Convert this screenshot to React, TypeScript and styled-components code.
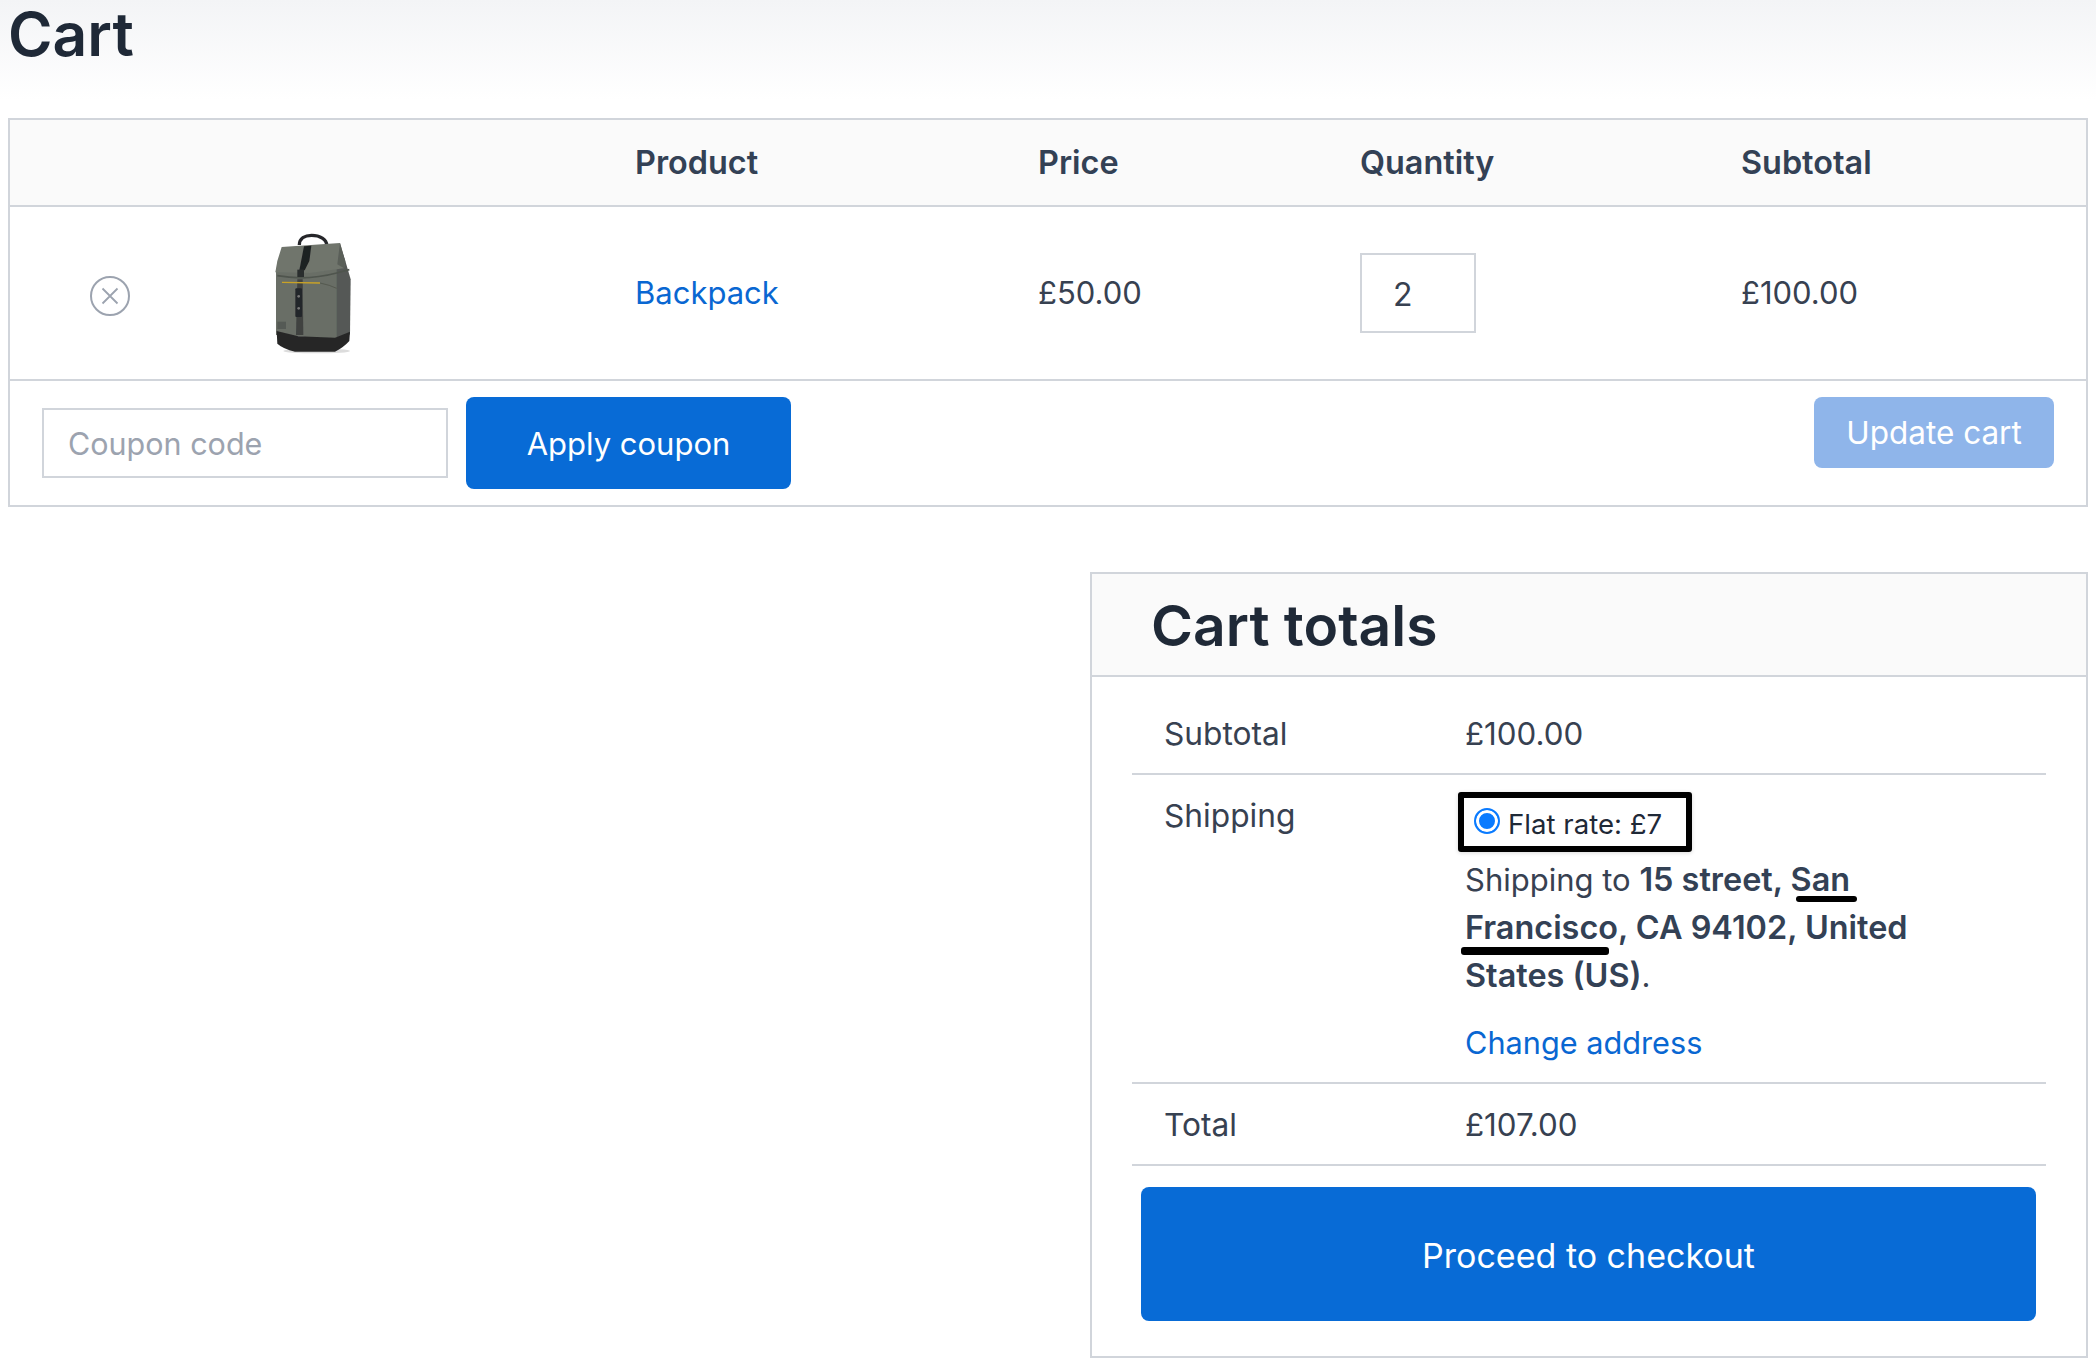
import React from 'react';
import styled, { createGlobalStyle } from 'styled-components';

const GlobalStyle = createGlobalStyle`
  html, body {
    margin: 0;
    padding: 0;
    background: #ffffff;
  }
  body {
    font-family: Inter, "Noto Sans", sans-serif;
    font-size: 32px;
    line-height: 48px;
    color: #374151;
  }
  * {
    box-sizing: border-box;
  }
`;

const Page = styled.div`
  width: 2096px;
  height: 1366px;
  overflow: hidden;
  background: linear-gradient(#f3f4f6 0, #ffffff 100px) no-repeat;
  padding: 0 8px;
`;

const PageTitle = styled.h1`
  margin: 0;
  height: 118px;
  font-size: 60.5px;
  line-height: 68px;
  font-weight: 600;
  color: #1f2937;
`;

const CartTable = styled.section`
  border: 2px solid #d1d5db;
`;

const Row = styled.div`
  display: grid;
  grid-template-columns: 200px 425px 403px 322px 381px 1fr;
  align-items: center;
  border-bottom: 2px solid #d1d5db;
`;

const HeadRow = styled(Row)`
  height: 87px;
  background: #fafafa;
  font-size: 32.4px;
  font-weight: 600;
  color: #334155;
`;

const ItemRow = styled(Row)`
  height: 174px;
`;

const RemoveCell = styled.div`
  display: flex;
  justify-content: center;
  padding-top: 5px;
`;

const ThumbCell = styled.div`
  display: flex;
  padding-left: 10px;
  margin-top: -4px;
`;

const ProductLink = styled.a`
  font-size: 31px;
  color: #0967d2;
  text-decoration: none;
`;

const Money = styled.div`
  font-size: 31px;
`;

const QtyInput = styled.input`
  width: 116px;
  height: 80px;
  border: 2px solid #d1d5db;
  background: #fff;
  padding: 2px 31px 0;
  font: inherit;
  color: inherit;
  outline: none;
`;

const ActionsRow = styled.div`
  height: 124px;
  display: flex;
  align-items: flex-start;
  padding: 16px 32px 0 32px;
`;

const CouponInput = styled.input`
  width: 406px;
  height: 70px;
  margin-top: 11px;
  border: 2px solid #d1d5db;
  padding: 0 24px;
  font: inherit;
  font-size: 30.5px;
  color: inherit;
  outline: none;
  &::placeholder {
    color: #9ca3af;
    opacity: 1;
  }
`;

const Button = styled.button<{ $muted?: boolean }>`
  border: 0;
  border-radius: 8px;
  background: ${({ $muted }) => ($muted ? '#8fb5ea' : '#086bd6')};
  color: #ffffff;
  font: inherit;
  padding: 0;
`;

const ApplyButton = styled(Button)`
  width: 325px;
  height: 92px;
  margin-left: 18px;
  font-size: 31px;
  padding-top: 2px;
`;

const UpdateButton = styled(Button)`
  width: 240px;
  height: 71px;
  margin-left: auto;
  font-size: 31.5px;
`;

const TotalsCard = styled.section`
  width: 998px;
  height: 786px;
  margin: 65px 0 0 auto;
  border: 2px solid #d1d5db;
`;

const TotalsHeader = styled.div`
  height: 103px;
  background: #fafafa;
  border-bottom: 2px solid #d1d5db;
  padding: 2px 0 0 59px;
  display: flex;
  align-items: center;
`;

const TotalsTitle = styled.h2`
  margin: 0;
  font-size: 57px;
  line-height: 68px;
  font-weight: 600;
  color: #1f2937;
`;

const TotalsBody = styled.div`
  padding: 16px 40px 0 40px;
`;

const TotalsRow = styled.div`
  display: grid;
  grid-template-columns: 301px 1fr;
  padding: 17px 32px 15px 32px;
  border-bottom: 2px solid #d1d5db;
  font-size: 31.7px;
`;

const AmountCell = styled.div`
  font-size: 31.3px;
`;

const ShippingBox = styled.label`
  display: flex;
  align-items: center;
  gap: 8px;
  width: 234px;
  height: 60px;
  margin: 0 0 4px -7px;
  padding-left: 10px;
  border: 6px solid #000000;
  border-radius: 3px;
  box-shadow: 0 1px 4px rgba(0, 0, 0, 0.15);
  font-size: 27.6px;
  line-height: 32px;
  color: #1f2937;
`;

const RateText = styled.span`
  margin-top: 3px;
`;

const Radio = styled.input`
  appearance: none;
  flex: none;
  width: 26px;
  height: 26px;
  margin: -2px 0 0 0;
  border: 2px solid #0a7bff;
  border-radius: 50%;
  background: #0a7bff;
  box-shadow: inset 0 0 0 3px #ffffff;
`;

const Address = styled.div`
  max-width: 480px;
  font-size: 31px;
`;

const Strong = styled.strong`
  font-size: 32.4px;
  font-weight: 600;
  color: #334155;
`;

const Marked = styled.span<{ $thick?: boolean }>`
  position: relative;
  &::after {
    content: '';
    position: absolute;
    left: ${({ $thick }) => ($thick ? '-4px' : '5px')};
    right: ${({ $thick }) => ($thick ? '9px' : '-7px')};
    bottom: ${({ $thick }) => ($thick ? '-8px' : '-3px')};
    height: ${({ $thick }) => ($thick ? '8px' : '6px')};
    border-radius: 3px;
    background: #000000;
  }
`;

const AddressLink = styled.a`
  display: block;
  margin-top: 19px;
  font-size: 30.7px;
  color: #0967d2;
  text-decoration: none;
`;

const CheckoutButton = styled(Button)`
  display: block;
  width: 895px;
  height: 134px;
  margin: 21px 0 0 9px;
  font-size: 34px;
  padding-top: 4px;
`;

const RemoveIcon = () => (
  <svg width="40" height="40" viewBox="0 0 40 40" fill="none" stroke="#9ca3af" strokeWidth="2">
    <circle cx="20" cy="20" r="19" />
    <path d="M12.5 12.5 L27.5 27.5 M27.5 12.5 L12.5 27.5" strokeWidth="1.8" />
  </svg>
);

const Backpack = () => (
  <svg width="160" height="160" viewBox="0 0 480 480">
    <defs>
      <filter id="soft">
        <feGaussianBlur stdDeviation="1.6" />
      </filter>
    </defs>
    <g filter="url(#soft)">
      <ellipse cx="290" cy="420" rx="100" ry="7" fill="#dcdcdc" />
      <path d="M238 102 C238 82 255 73 275 73 C300 73 320 85 320 102" fill="none" stroke="#25272a" strokeWidth="10" />
      <path d="M358 100 L376 150 L392 205 L390 370 L345 395 L345 120 Z" fill="#555956" />
      <path d="M168 175 L350 165 L350 385 L168 372 Z" fill="#696e66" />
      <path d="M172 194 Q260 210 350 186 L388 176" fill="none" stroke="#4f544e" strokeWidth="5" />
      <path d="M170 360 L235 376 L345 380 L390 362 L388 390 Q370 410 345 422 L225 422 Q190 414 172 398 Z" fill="#272728" />
      <path d="M185 108 L360 96 L375 150 L372 172 L270 186 L166 184 L172 150 Z" fill="#6f746c" />
      <path d="M360 96 L376 150 L372 172 L352 160 Z" fill="#5a5e59" />
      <path d="M252 106 L274 104 L268 150 L254 178 L238 178 Z" fill="#1f2123" />
      <path d="M232 205 L248 205 L250 372 L228 372 Z" fill="#3f4241" />
      <rect x="232" y="176" width="20" height="22" fill="#2b2d2f" />
      <path d="M186 214 L300 216" stroke="#c9a227" strokeWidth="4" fill="none" />
      <path d="M300 216 Q330 222 350 232" stroke="#55594f" strokeWidth="3" fill="none" />
      <rect x="226" y="232" width="20" height="86" rx="3" fill="#24262a" />
      <circle cx="236" cy="256" r="4" fill="#777" />
      <circle cx="236" cy="292" r="4" fill="#777" />
      <rect x="172" y="332" width="26" height="22" fill="#555a55" />
    </g>
  </svg>
);

const App = () => (
  <>
    <GlobalStyle />
    <Page>
      <PageTitle>Cart</PageTitle>
      <CartTable>
        <HeadRow>
          <div />
          <div />
          <div>Product</div>
          <div>Price</div>
          <div>Quantity</div>
          <div>Subtotal</div>
        </HeadRow>
        <ItemRow>
          <RemoveCell>
            <RemoveIcon />
          </RemoveCell>
          <ThumbCell>
            <Backpack />
          </ThumbCell>
          <ProductLink href="#">Backpack</ProductLink>
          <Money>£50.00</Money>
          <div>
            <QtyInput defaultValue="2" />
          </div>
          <Money>£100.00</Money>
        </ItemRow>
        <ActionsRow>
          <CouponInput placeholder="Coupon code" />
          <ApplyButton>Apply coupon</ApplyButton>
          <UpdateButton $muted>Update cart</UpdateButton>
        </ActionsRow>
      </CartTable>
      <TotalsCard>
        <TotalsHeader>
          <TotalsTitle>Cart totals</TotalsTitle>
        </TotalsHeader>
        <TotalsBody>
          <TotalsRow>
            <div>Subtotal</div>
            <AmountCell>£100.00</AmountCell>
          </TotalsRow>
          <TotalsRow>
            <div>Shipping</div>
            <div>
              <ShippingBox>
                <Radio type="radio" defaultChecked name="shipping" />
                <RateText>Flat rate: £7</RateText>
              </ShippingBox>
              <Address>
                Shipping to{' '}
                <Strong>
                  15 street, <Marked>San</Marked> <Marked $thick>Francisco</Marked>, CA 94102, United States (US)
                </Strong>
                .
              </Address>
              <AddressLink href="#">Change address</AddressLink>
            </div>
          </TotalsRow>
          <TotalsRow>
            <div>Total</div>
            <AmountCell>£107.00</AmountCell>
          </TotalsRow>
          <CheckoutButton>Proceed to checkout</CheckoutButton>
        </TotalsBody>
      </TotalsCard>
    </Page>
  </>
);

export default App;
